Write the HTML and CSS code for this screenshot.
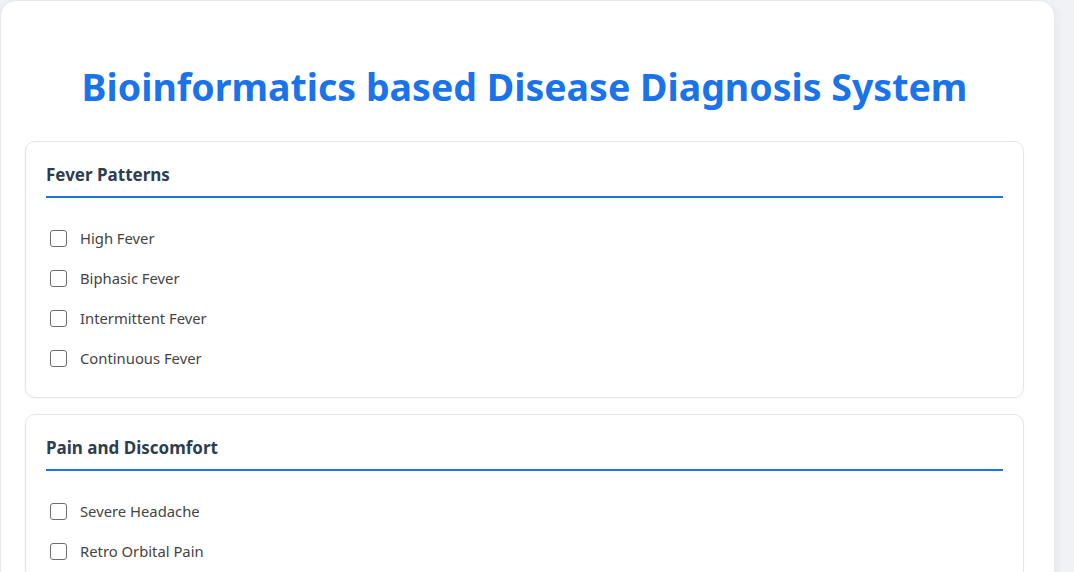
FILE: index.html
```html
<!DOCTYPE html>
<html lang="en">
<head>
<meta charset="utf-8">
<title>Bioinformatics based Disease Diagnosis System</title>
<link rel="stylesheet" href="styles.css">
</head>
<body>
<div class="container">
  <h1 class="title">Bioinformatics based Disease Diagnosis System</h1>
  <section class="card">
    <h2 class="card-title">Fever Patterns</h2>
    <div class="options">
      <label class="option"><input type="checkbox" class="box"><span>High Fever</span></label>
      <label class="option"><input type="checkbox" class="box"><span>Biphasic Fever</span></label>
      <label class="option"><input type="checkbox" class="box"><span>Intermittent Fever</span></label>
      <label class="option"><input type="checkbox" class="box"><span>Continuous Fever</span></label>
    </div>
  </section>
  <section class="card">
    <h2 class="card-title">Pain and Discomfort</h2>
    <div class="options">
      <label class="option"><input type="checkbox" class="box"><span>Severe Headache</span></label>
      <label class="option"><input type="checkbox" class="box"><span>Retro Orbital Pain</span></label>
    </div>
  </section>
</div>
</body>
</html>
```
FILE: styles.css
```css
html, body {
  margin: 0;
  padding: 0;
}
body {
  background: #f0f2f5;
  font-family: "Noto Sans", "Open Sans", sans-serif;
  height: 572px;
  overflow: hidden;
}
.container {
  box-sizing: border-box;
  width: 1055px;
  background: #ffffff;
  border: 1px solid #e6e8ec;
  border-radius: 16px;
  box-shadow: 0 2px 12px rgba(0, 0, 0, 0.06);
  padding: 0 30px 40px 24px;
  display: flex;
  flex-direction: column;
  gap: 16px;
}
.title {
  margin: 62px 0 14px;
  text-align: center;
  color: #1a73e8;
  font-size: 37.5px;
  line-height: 48px;
  font-weight: 700;
}
.card {
  border: 1px solid #e3e5e9;
  border-radius: 10px;
  padding: 20px 20px 27px;
  box-shadow: 0 1px 3px rgba(0, 0, 0, 0.04);
}
.card-title {
  margin: 0;
  font-size: 17px;
  line-height: 26px;
  font-weight: 700;
  color: #2c3e50;
  padding-bottom: 8px;
  border-bottom: 2px solid #1a73e8;
}
.options {
  margin-top: 28px;
  display: flex;
  flex-direction: column;
  gap: 16px;
}
.option {
  display: flex;
  align-items: center;
  gap: 13px;
  height: 24px;
  font-size: 14.8px;
  color: #444;
}
.box {
  appearance: none;
  -webkit-appearance: none;
  margin: 0 0 0 4px;
  width: 17px;
  height: 17px;
  border: 1.5px solid #6f6f6f;
  border-radius: 3px;
  background: #fff;
  box-sizing: border-box;
}
```
